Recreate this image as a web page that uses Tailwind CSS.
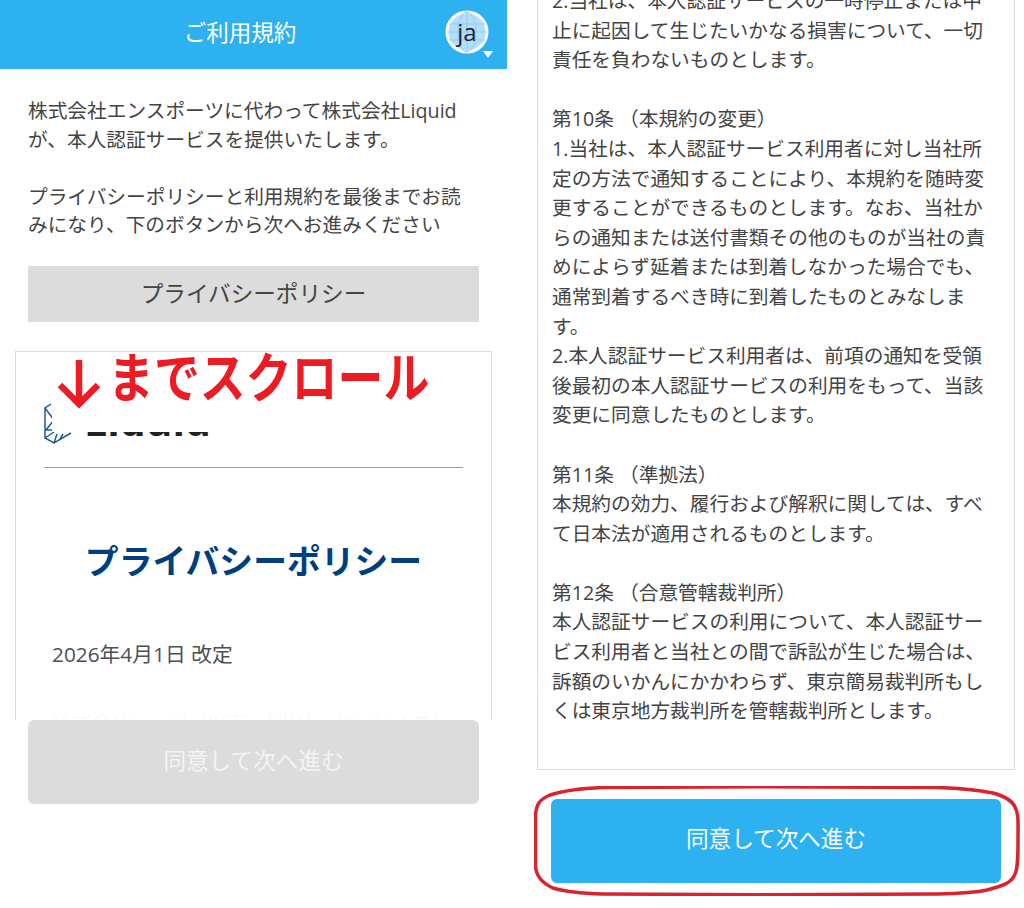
<!DOCTYPE html>
<html lang="ja">
<head>
  <meta charset="UTF-8">
  <title>ご利用規約</title>
  <meta name="viewport" content="width=device-width, initial-scale=1" />
  <script src="https://cdn.jsdelivr.net/npm/@tailwindcss/browser@4"></script>
</head>
<body class="bg-white h-[908px] overflow-hidden [font-family:'Open_Sans','Noto_Sans_CJK_JP',sans-serif]">

  <div class="flex">

    <!-- Left screen -->
    <div class="w-[507px] shrink-0">

      <!-- Header -->
      <div class="relative h-[69px] bg-[#2db1f0] flex items-center justify-center pr-[27px] pb-[4px] text-white text-[22.5px]">
        ご利用規約
        <div class="absolute left-[445px] top-[10px] w-[44px] h-[44px]">
          <svg width="44" height="44" viewBox="0 0 44 44" fill="none">
            <circle cx="22" cy="22" r="20" fill="#b5def8" stroke="#ffffff" stroke-width="3"/>
            <ellipse cx="22" cy="22" rx="9" ry="20" stroke="#8fcdf5" stroke-width="1"/>
            <path d="M22 2V42M4 14H40M2 22H42M4 30H40" stroke="#8fcdf5" stroke-width="1"/>
          </svg>
          <span class="absolute inset-0 flex items-center justify-center text-[24px] text-[#1a2430]">ja</span>
        </div>
        <div class="absolute left-[483px] top-[51px] w-0 h-0 border-l-[5px] border-r-[5px] border-t-[7px] border-l-transparent border-r-transparent border-t-white"></div>
      </div>

      <div class="px-[28px]">
        <p class="mt-[28px] text-[19.7px] leading-[28.5px] text-[#444] whitespace-nowrap">
          株式会社エンスポーツに代わって株式会社Liquid<br>
          が、本人認証サービスを提供いたします。<br>
          <br>
          プライバシーポリシーと利用規約を最後までお読<br>
          みになり、下のボタンから次へお進みください
        </p>

        <div class="mt-[26px] h-[56px] bg-[#dcdcdc] flex items-center justify-center text-[22.6px] text-[#444]">プライバシーポリシー</div>

        <!-- Policy frame -->
        <div class="relative mt-[29px] -mx-[13px] h-[369px] border border-b-0 border-[#dddddd] overflow-hidden">
          <div class="mx-[28px] h-[116px] pt-[51px] border-b border-[#999999] flex items-start">
            <svg width="30" height="42" viewBox="0 0 30 42" fill="none" stroke="#1f5a94" stroke-width="1.5" class="shrink-0">
              <path d="M7 1L1 5V35L10 40L27 30"/>
              <path d="M1 5L10 17L2 27M1 27L9 27M1 35L10 29M10 40L13 31M16 36L19 31"/>
            </svg>
            <div class="ml-[10px] h-[33px] overflow-hidden text-[41px] leading-[34px] font-bold text-[#222]">Liquid</div>
          </div>

          <h1 class="mt-[68px] text-center text-[33.8px] leading-[50px] font-bold text-[#003f7f]">プライバシーポリシー</h1>
          <p class="mt-[53px] ml-[36px] text-[20.8px] leading-[30px] text-[#4a5056]">2026年4月1日 改定</p>
          <p class="mt-[39px] ml-[36px] text-[19.7px] leading-[30px] text-[#4a5056] whitespace-nowrap">株式会社Liquid（以下、「当社」といいます）</p>

          <!-- fade at the bottom of the frame -->
          <div class="absolute -left-px -right-px bottom-0 h-[44px] bg-gradient-to-b from-white/0 via-white/95 to-white/97"></div>

          <!-- white box behind the annotation -->
          <div class="absolute left-[36px] -top-px w-[386px] h-[81px] bg-white"></div>
        </div>

        <!-- annotation -->
        <div class="absolute left-[57px] top-[345px] flex items-center h-[66px] text-[#ed1c24] font-bold whitespace-nowrap">
          <svg width="44" height="50" viewBox="0 0 44 50" fill="none" stroke="#ed1c24" stroke-width="6.5" class="mt-[10px] mr-[7px] shrink-0">
            <path d="M22 2V45M3 27L22 46L41 27"/>
          </svg>
          <span class="[font-family:'Noto_Sans_CJK_JP',sans-serif] text-[54px] leading-[66px] -mt-[6px] origin-left scale-x-[0.85]">までスクロール</span>
        </div>

        <div class="h-[84px] pb-[2px] rounded-[6px] bg-[#dcdcdc] flex items-center justify-center text-[22.6px] text-[#f4f4f4]">同意して次へ進む</div>
      </div>
    </div>

    <!-- Right screen -->
    <div class="ml-[30px] w-[478px] shrink-0">
      <div class="h-[770px] border border-t-0 border-[#dddddd] px-[14px] overflow-hidden">
        <p class="-mt-[14px] text-[19.7px] leading-[29.6px] text-[#444] whitespace-nowrap">
          2.当社は、本人認証サービスの一時停止または中<br>
          止に起因して生じたいかなる損害について、一切<br>
          責任を負わないものとします。<br>
          <br>
          第10条 （本規約の変更）<br>
          1.当社は、本人認証サービス利用者に対し当社所<br>
          定の方法で通知することにより、本規約を随時変<br>
          更することができるものとします。なお、当社か<br>
          らの通知または送付書類その他のものが当社の責<br>
          めによらず延着または到着しなかった場合でも、<br>
          通常到着するべき時に到着したものとみなしま<br>
          す。<br>
          2.本人認証サービス利用者は、前項の通知を受領<br>
          後最初の本人認証サービスの利用をもって、当該<br>
          変更に同意したものとします。<br>
          <br>
          第11条 （準拠法）<br>
          本規約の効力、履行および解釈に関しては、すべ<br>
          て日本法が適用されるものとします。<br>
          <br>
          第12条 （合意管轄裁判所）<br>
          本人認証サービスの利用について、本人認証サー<br>
          ビス利用者と当社との間で訴訟が生じた場合は、<br>
          訴額のいかんにかかわらず、東京簡易裁判所もし<br>
          くは東京地方裁判所を管轄裁判所とします。
        </p>
      </div>

      <div class="relative mt-[29px] mx-[14px] h-[84px] pb-[4px] rounded-[6px] bg-[#2db1f0] flex items-center justify-center text-[22.6px] text-white">
        同意して次へ進む
        <svg class="absolute -left-[17px] -top-[13px]" width="486" height="110" viewBox="0 0 486 110" fill="none" stroke="#d9232e" stroke-width="3.5">
          <path d="M69 1.5C45 2.5 28 5 16 9C6 13 2 18 1.5 30L1.5 80C2 90 8 97 19 102C32 106 50 107.5 69 108C150 109 340 109 403 108C425 107.5 440 107 453 104C468 100 478 97 481 88C484 82 484 70 484 54C484 38 485 28 481 21C478 14 470 10 459 7C440 3 420 2 403 1.5C340 0.5 150 0.5 69 1.5Z"/>
        </svg>
      </div>
    </div>

  </div>

</body>
</html>
